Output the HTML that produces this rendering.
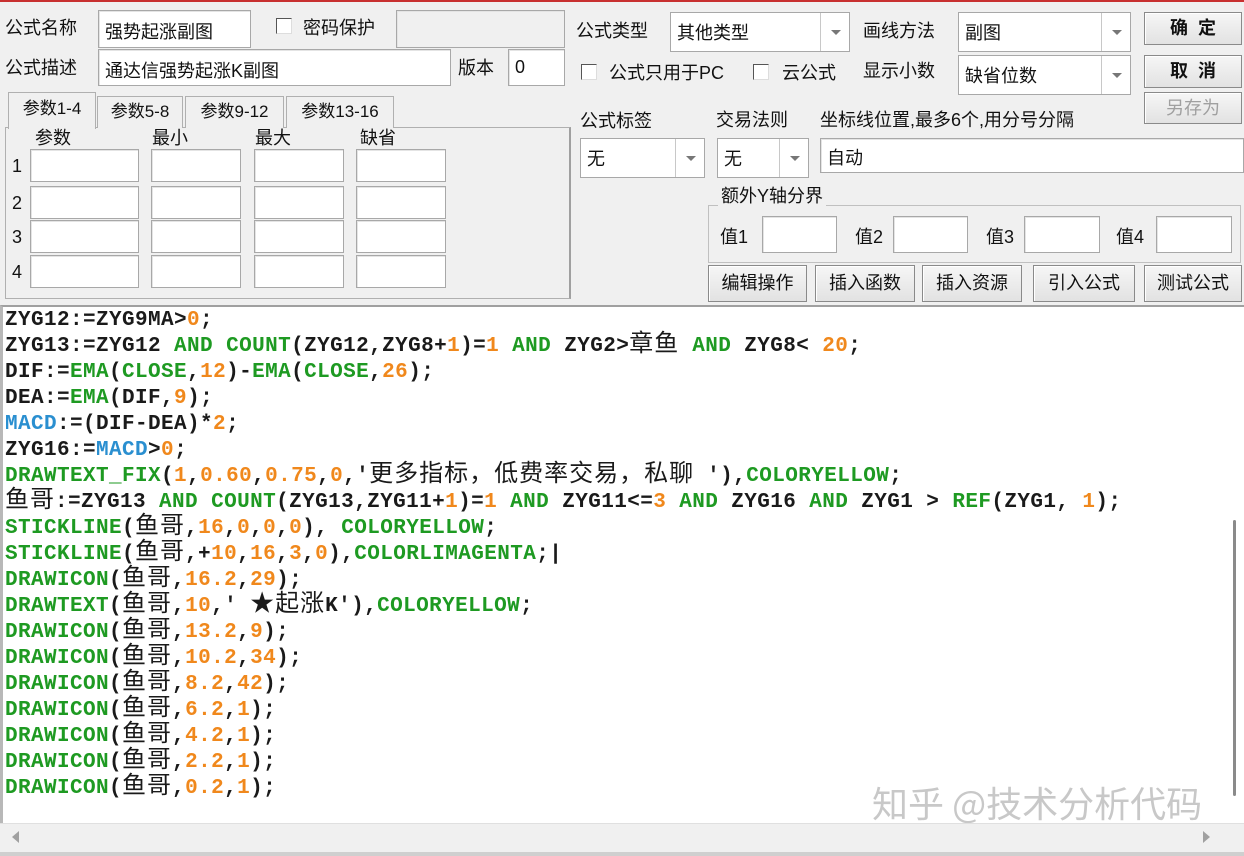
<!DOCTYPE html>
<html><head><meta charset="utf-8">
<style>
*{margin:0;padding:0;box-sizing:border-box}
html,body{width:1244px;height:856px;overflow:hidden}
body{background:#f0f0f0;position:relative;font-family:"Liberation Sans","Noto Sans CJK SC",sans-serif;font-size:18px;color:#111}
.a{position:absolute;white-space:nowrap}
.in{position:absolute;background:#fff;border:1px solid #a8a8a8;box-shadow:inset 1px 1px 0 #e4e4e4}
.lb{position:absolute;white-space:nowrap;font-size:18px;line-height:22px}
.cb{position:absolute;width:16px;height:16px;background:#fff;border:1px solid #555;border-right-color:#ddd;border-bottom-color:#ddd}
.combo{position:absolute;background:#fff;border:1px solid #a8a8a8}
.combo .t{position:absolute;left:6px;top:50%;transform:translateY(-50%);font-size:18px}
.combo .d{position:absolute;right:0;top:0;bottom:0;width:29px;border-left:1px solid #c8c8c8}
.combo .d:after{content:"";position:absolute;left:10px;top:50%;margin-top:-2px;border:5px solid transparent;border-top:5px solid #777;border-bottom:0}
.btn{position:absolute;background:linear-gradient(#f6f6f6,#e2e2e2);border:1px solid #8a8a8a;box-shadow:inset 1px 1px 0 #fff;text-align:center;font-size:18px}
.tab{position:absolute;font-size:17px;border:1px solid #b0b0b0;border-bottom:none;background:#f0f0f0;text-align:center;line-height:30px}
.code{position:absolute;left:5px;top:308px;font-family:"Liberation Mono",monospace;font-weight:bold;font-size:21px;letter-spacing:0.4px;color:#1a1a1a}
.code div{height:26px;line-height:26px;overflow:visible;white-space:pre}
.g{color:#1e9a22}.o{color:#f0881c}.b{color:#2a8fd0}
.c{font-family:"Noto Sans CJK SC",sans-serif;font-weight:normal;font-size:24px;letter-spacing:1px;line-height:1px}
</style></head><body>
<div class="a" style="left:0;top:0;width:1244px;height:2px;background:#c83030"></div>

<div class="lb" style="left:5px;top:17px">公式名称</div>
<div class="in" style="left:98px;top:10px;width:153px;height:38px"><span class="a" style="left:6px;top:7px">强势起涨副图</span></div>
<div class="cb" style="left:276px;top:18px"></div>
<div class="lb" style="left:303px;top:17px">密码保护</div>
<div class="in" style="left:396px;top:10px;width:169px;height:38px;background:#f0f0f0"></div>
<div class="lb" style="left:5px;top:57px">公式描述</div>
<div class="in" style="left:98px;top:49px;width:353px;height:37px"><span class="a" style="left:6px;top:7px">通达信强势起涨K副图</span></div>
<div class="lb" style="left:458px;top:57px">版本</div>
<div class="in" style="left:508px;top:49px;width:57px;height:37px"><span class="a" style="left:6px;top:7px">0</span></div>

<div class="a" style="left:5px;top:127px;width:566px;height:172px;border:1px solid #b0b0b0;border-right:2px solid #a0a0a0"></div>
<div class="tab" style="left:8px;top:92px;width:88px;height:37px;line-height:32px">参数1-4</div>
<div class="tab" style="left:97px;top:96px;width:86px;height:32px">参数5-8</div>
<div class="tab" style="left:185px;top:96px;width:99px;height:32px">参数9-12</div>
<div class="tab" style="left:286px;top:96px;width:108px;height:32px">参数13-16</div>
<div class="lb" style="left:35px;top:127px">参数</div>
<div class="lb" style="left:152px;top:127px">最小</div>
<div class="lb" style="left:255px;top:127px">最大</div>
<div class="lb" style="left:360px;top:127px">缺省</div>
<div class="lb" style="left:12px;top:155px">1</div>
<div class="lb" style="left:12px;top:192px">2</div>
<div class="lb" style="left:12px;top:226px">3</div>
<div class="lb" style="left:12px;top:261px">4</div>
<div class="in" style="left:30px;top:149px;width:109px;height:33px"></div><div class="in" style="left:151px;top:149px;width:90px;height:33px"></div><div class="in" style="left:254px;top:149px;width:90px;height:33px"></div><div class="in" style="left:356px;top:149px;width:90px;height:33px"></div>
<div class="in" style="left:30px;top:186px;width:109px;height:33px"></div><div class="in" style="left:151px;top:186px;width:90px;height:33px"></div><div class="in" style="left:254px;top:186px;width:90px;height:33px"></div><div class="in" style="left:356px;top:186px;width:90px;height:33px"></div>
<div class="in" style="left:30px;top:220px;width:109px;height:33px"></div><div class="in" style="left:151px;top:220px;width:90px;height:33px"></div><div class="in" style="left:254px;top:220px;width:90px;height:33px"></div><div class="in" style="left:356px;top:220px;width:90px;height:33px"></div>
<div class="in" style="left:30px;top:255px;width:109px;height:33px"></div><div class="in" style="left:151px;top:255px;width:90px;height:33px"></div><div class="in" style="left:254px;top:255px;width:90px;height:33px"></div><div class="in" style="left:356px;top:255px;width:90px;height:33px"></div>

<div class="lb" style="left:576px;top:20px">公式类型</div>
<div class="combo" style="left:670px;top:12px;width:180px;height:40px"><span class="t">其他类型</span><span class="d"></span></div>
<div class="lb" style="left:863px;top:20px">画线方法</div>
<div class="combo" style="left:958px;top:12px;width:173px;height:40px"><span class="t">副图</span><span class="d"></span></div>
<div class="btn" style="left:1144px;top:12px;width:98px;height:33px;line-height:31px;font-weight:bold">确&nbsp;&nbsp;定</div>
<div class="btn" style="left:1144px;top:55px;width:98px;height:33px;line-height:31px;font-weight:bold">取&nbsp;&nbsp;消</div>
<div class="btn" style="left:1144px;top:92px;width:98px;height:32px;line-height:30px;color:#a0a0a0">另存为</div>
<div class="cb" style="left:581px;top:64px"></div>
<div class="lb" style="left:609px;top:62px">公式只用于PC</div>
<div class="cb" style="left:753px;top:64px"></div>
<div class="lb" style="left:782px;top:62px">云公式</div>
<div class="lb" style="left:863px;top:60px">显示小数</div>
<div class="combo" style="left:958px;top:55px;width:173px;height:40px"><span class="t">缺省位数</span><span class="d"></span></div>
<div class="lb" style="left:580px;top:110px">公式标签</div>
<div class="lb" style="left:716px;top:109px">交易法则</div>
<div class="lb" style="left:820px;top:109px">坐标线位置,最多6个,用分号分隔</div>
<div class="combo" style="left:580px;top:138px;width:125px;height:40px"><span class="t">无</span><span class="d"></span></div>
<div class="combo" style="left:717px;top:138px;width:92px;height:40px"><span class="t">无</span><span class="d"></span></div>
<div class="in" style="left:820px;top:138px;width:424px;height:35px"><span class="a" style="left:6px;top:5px">自动</span></div>
<div class="a" style="left:708px;top:205px;width:533px;height:58px;border:1px solid #c0c0c0"></div>
<div class="lb" style="left:718px;top:185px;background:#f0f0f0;padding:0 3px">额外Y轴分界</div>
<div class="lb" style="left:720px;top:226px">值1</div><div class="in" style="left:762px;top:216px;width:75px;height:37px"></div>
<div class="lb" style="left:855px;top:226px">值2</div><div class="in" style="left:893px;top:216px;width:75px;height:37px"></div>
<div class="lb" style="left:986px;top:226px">值3</div><div class="in" style="left:1024px;top:216px;width:76px;height:37px"></div>
<div class="lb" style="left:1116px;top:226px">值4</div><div class="in" style="left:1156px;top:216px;width:76px;height:37px"></div>
<div class="btn" style="left:708px;top:265px;width:99px;height:37px;line-height:35px">编辑操作</div>
<div class="btn" style="left:815px;top:265px;width:100px;height:37px;line-height:35px">插入函数</div>
<div class="btn" style="left:922px;top:265px;width:100px;height:37px;line-height:35px">插入资源</div>
<div class="btn" style="left:1033px;top:265px;width:102px;height:37px;line-height:35px">引入公式</div>
<div class="btn" style="left:1144px;top:265px;width:98px;height:37px;line-height:35px">测试公式</div>

<div class="a" style="left:0;top:305px;width:1244px;height:551px;background:#fff;border-top:2px solid #a0a0a0;border-left:3px solid #b8b8b8"></div>
<div class="a" style="left:1233px;top:520px;width:3px;height:276px;background:#8a8a8a;border-radius:2px"></div>
<div class="code"><div>ZYG12:=ZYG9MA&gt;<span class="o">0</span>;</div><div>ZYG13:=ZYG12 <span class="g">AND</span> <span class="g">COUNT</span>(ZYG12,ZYG8+<span class="o">1</span>)=<span class="o">1</span> <span class="g">AND</span> ZYG2&gt;<span class="c">章鱼</span> <span class="g">AND</span> ZYG8&lt; <span class="o">20</span>;</div><div>DIF:=<span class="g">EMA</span>(<span class="g">CLOSE</span>,<span class="o">12</span>)-<span class="g">EMA</span>(<span class="g">CLOSE</span>,<span class="o">26</span>);</div><div>DEA:=<span class="g">EMA</span>(DIF,<span class="o">9</span>);</div><div><span class="b">MACD</span>:=(DIF-DEA)*<span class="o">2</span>;</div><div>ZYG16:=<span class="b">MACD</span>&gt;<span class="o">0</span>;</div><div><span class="g">DRAWTEXT_FIX</span>(<span class="o">1</span>,<span class="o">0.60</span>,<span class="o">0.75</span>,<span class="o">0</span>,'<span class="c">更多指标，低费率交易，私聊</span> '),<span class="g">COLORYELLOW</span>;</div><div><span class="c">鱼哥</span>:=ZYG13 <span class="g">AND</span> <span class="g">COUNT</span>(ZYG13,ZYG11+<span class="o">1</span>)=<span class="o">1</span> <span class="g">AND</span> ZYG11&lt;=<span class="o">3</span> <span class="g">AND</span> ZYG16 <span class="g">AND</span> ZYG1 &gt; <span class="g">REF</span>(ZYG1, <span class="o">1</span>);</div><div><span class="g">STICKLINE</span>(<span class="c">鱼哥</span>,<span class="o">16</span>,<span class="o">0</span>,<span class="o">0</span>,<span class="o">0</span>), <span class="g">COLORYELLOW</span>;</div><div><span class="g">STICKLINE</span>(<span class="c">鱼哥</span>,+<span class="o">10</span>,<span class="o">16</span>,<span class="o">3</span>,<span class="o">0</span>),<span class="g">COLORLIMAGENTA</span>;|</div><div><span class="g">DRAWICON</span>(<span class="c">鱼哥</span>,<span class="o">16.2</span>,<span class="o">29</span>);</div><div><span class="g">DRAWTEXT</span>(<span class="c">鱼哥</span>,<span class="o">10</span>,' <span class="c">★起涨</span>K'),<span class="g">COLORYELLOW</span>;</div><div><span class="g">DRAWICON</span>(<span class="c">鱼哥</span>,<span class="o">13.2</span>,<span class="o">9</span>);</div><div><span class="g">DRAWICON</span>(<span class="c">鱼哥</span>,<span class="o">10.2</span>,<span class="o">34</span>);</div><div><span class="g">DRAWICON</span>(<span class="c">鱼哥</span>,<span class="o">8.2</span>,<span class="o">42</span>);</div><div><span class="g">DRAWICON</span>(<span class="c">鱼哥</span>,<span class="o">6.2</span>,<span class="o">1</span>);</div><div><span class="g">DRAWICON</span>(<span class="c">鱼哥</span>,<span class="o">4.2</span>,<span class="o">1</span>);</div><div><span class="g">DRAWICON</span>(<span class="c">鱼哥</span>,<span class="o">2.2</span>,<span class="o">1</span>);</div><div><span class="g">DRAWICON</span>(<span class="c">鱼哥</span>,<span class="o">0.2</span>,<span class="o">1</span>);</div></div>
<div class="a" style="left:872px;top:780px;font-size:36px;color:#c8c8c8;font-family:'Noto Sans CJK SC',sans-serif;line-height:44px">知乎 @技术分析代码</div>
<div class="a" style="left:0;top:823px;width:1244px;height:29px;background:#f0f0f0;border-top:1px solid #e0e0e0"></div>
<div class="a" style="left:0;top:852px;width:1244px;height:4px;background:#cfcfcf"></div>
<div class="a" style="left:12px;top:831px;border:6px solid transparent;border-right:7px solid #a0a0a0;border-left:0"></div>
<div class="a" style="left:1203px;top:831px;border:6px solid transparent;border-left:7px solid #a0a0a0;border-right:0"></div>
</body></html>
